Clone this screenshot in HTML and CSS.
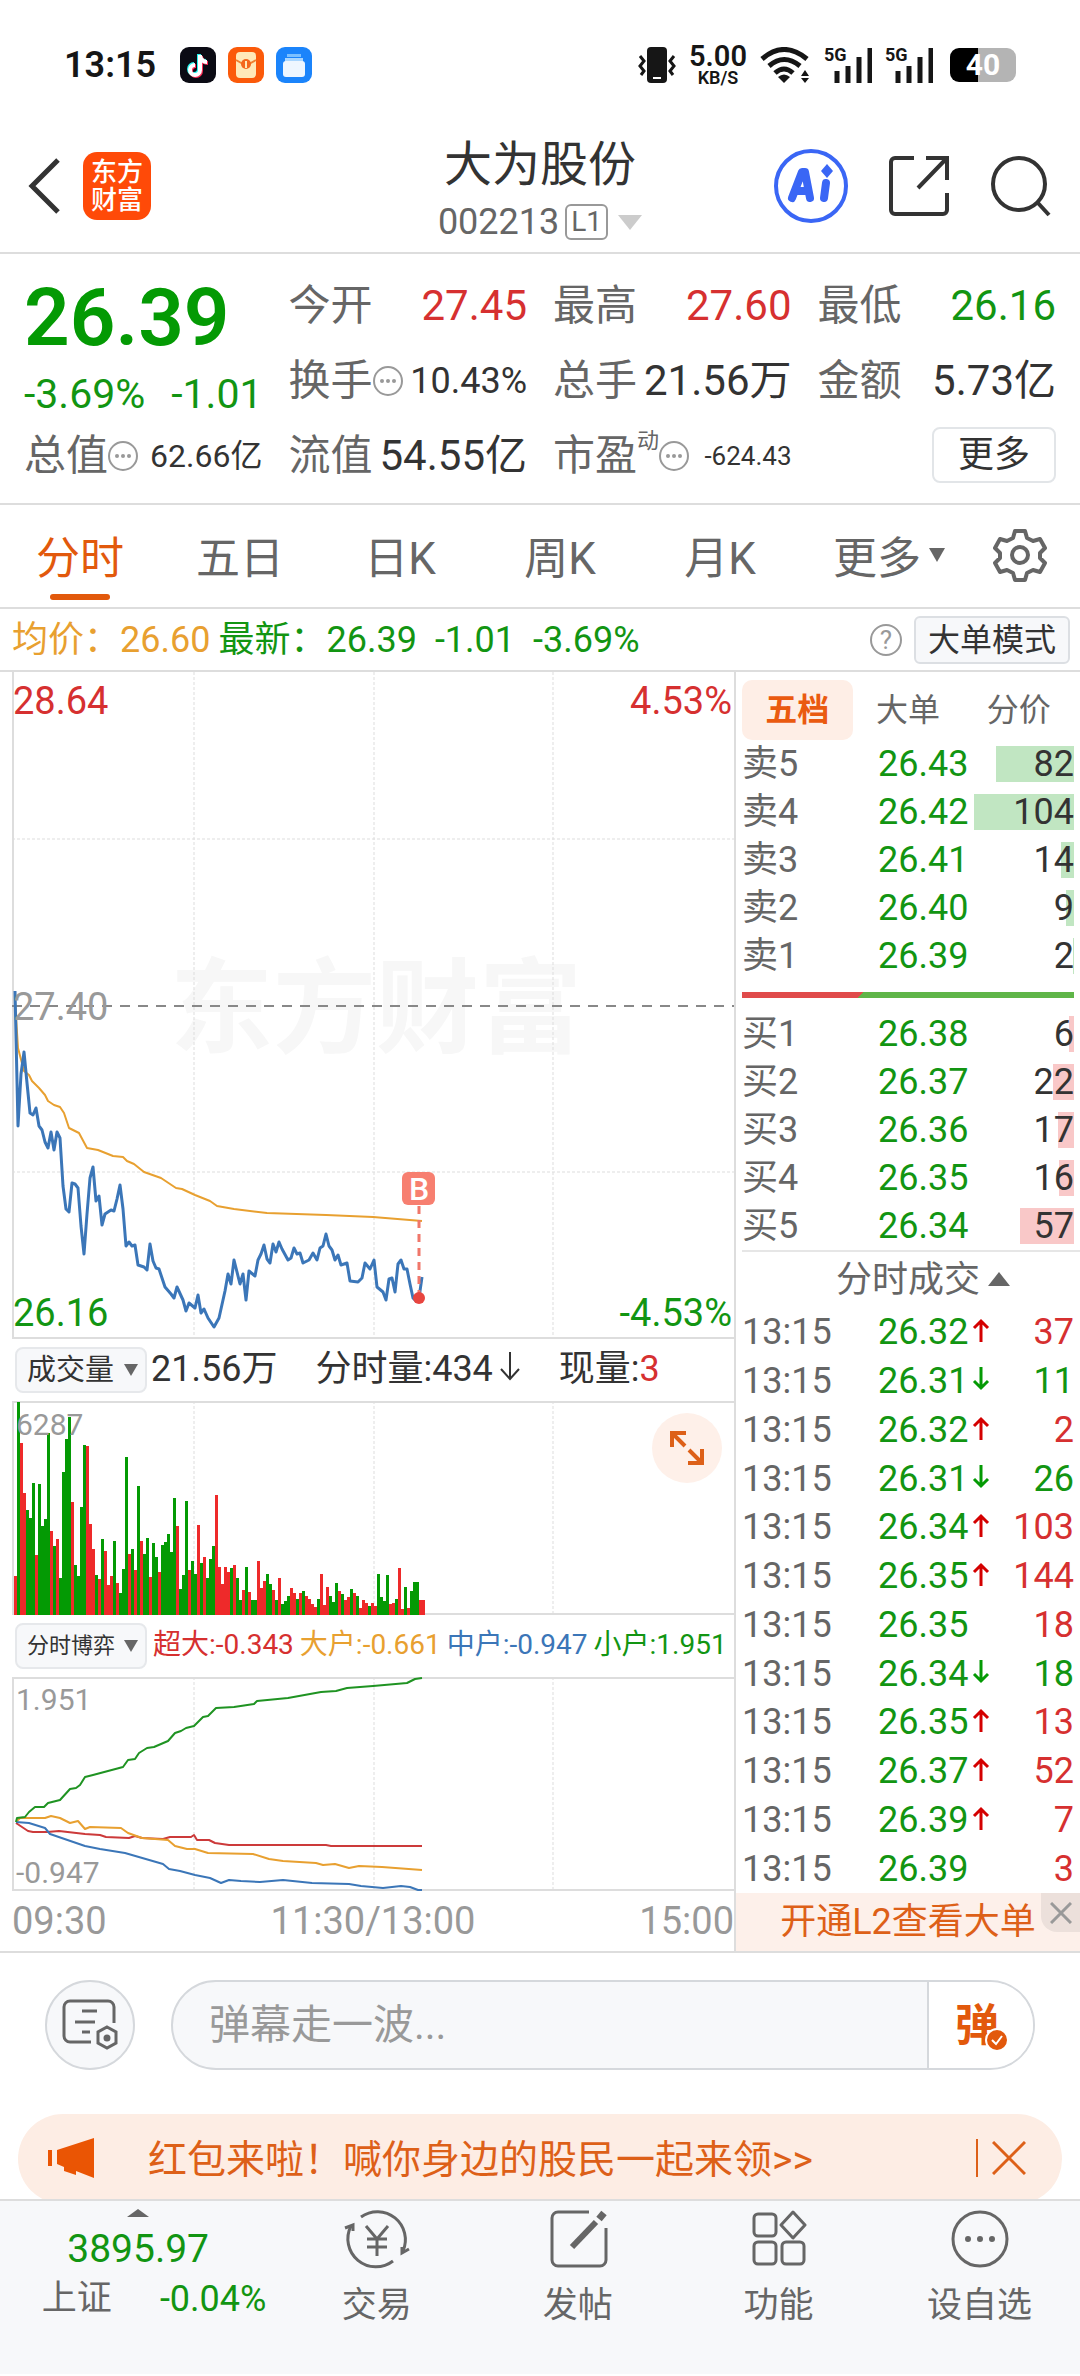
FILE: index.html
```html
<!DOCTYPE html>
<html lang="zh-CN">
<head>
    <meta charset="UTF-8">
    <meta name="viewport" content="width=device-width, initial-scale=1.0">
    <title>大为股份 002213</title>
    <link rel="stylesheet" href="styles.css">
</head>
<body>
    <div class="status-bar">
        <span class="clock">13:15</span>
        <svg class="app-icon" viewBox="0 0 36 36">
            <rect width="36" height="36" rx="9" fill="#0b0b14"/>
            <g fill="none" stroke-width="4">
                <path d="M19 7v15a5 5 0 1 1-5-5M19 8c1 4 3 6 7 6" stroke="#25f4ee"/>
                <path d="M21 9v15a5 5 0 1 1-5-5M21 10c1 4 3 6 7 6" stroke="#fe2c55"/>
                <path d="M20 8v15a5 5 0 1 1-5-5M20 9c1 4 3 6 7 6" stroke="#fff"/>
            </g>
        </svg>
        <svg class="app-icon" viewBox="0 0 36 36">
            <rect width="36" height="36" rx="9" fill="#fb5a0a"/>
            <rect x="8" y="5" width="20" height="26" rx="4" fill="#ffe9b8"/>
            <path d="M8 13l7 4M28 13l-7 4" stroke="#f08030" stroke-width="2"/>
            <circle cx="18" cy="17" r="5" fill="#f4661c"/>
            <path d="M18 14v7" stroke="#ffe9b8" stroke-width="2"/>
        </svg>
        <svg class="app-icon" viewBox="0 0 36 36">
            <rect width="36" height="36" rx="9" fill="#1b84fb"/>
            <path d="M11 7h14v3H11z" fill="#7cc0ff"/>
            <path d="M9 11h18v4H9z" fill="#a9d6ff"/>
            <rect x="7" y="14" width="22" height="16" rx="3" fill="#eef6ff"/>
        </svg>
        <div class="status-right">
            <svg width="38" height="36" viewBox="0 0 38 36">
                <rect x="9" y="0" width="20" height="36" rx="4" fill="#161616"/>
                <path d="M15 31h8" stroke="#fff" stroke-width="2"/>
                <path d="M2 9l4 5-4 5 4 5-3 4M36 9l-4 5 4 5-4 5 3 4" fill="none" stroke="#161616" stroke-width="3"/>
            </svg>
            <span class="speed"><b>5.00</b><small>KB/S</small></span>
            <svg width="51" height="36" viewBox="0 0 51 36">
                <g fill="none" stroke="#161616" stroke-width="5">
                    <path d="M2 12Q24-7 47 12"/>
                    <path d="M9 19Q24 6 40 19"/>
                    <path d="M15 26Q24 18 33 26"/>
                </g>
                <path d="M18 30q6-5 12 0l-6 6z" fill="#161616"/>
                <path d="M41 29l4-6 4 6zM41 31l4 5 4-5z" fill="#161616"/>
            </svg>
            <span class="signal">
                <small>5G</small>
                <svg width="48" height="36" viewBox="0 0 48 36"><path d="M13 36V24M24 36V19M35 36V10M46 36V1" stroke="#161616" stroke-width="5"/></svg>
            </span>
            <span class="signal">
                <small>5G</small>
                <svg width="48" height="36" viewBox="0 0 48 36"><path d="M13 36V24M24 36V19M35 36V10M46 36V1" stroke="#161616" stroke-width="5"/></svg>
            </span>
            <span class="battery">40</span>
        </div>
    </div>

    <header class="header">
        <div class="header-left">
            <button aria-label="返回">
                <svg width="34" height="56" viewBox="0 0 34 56"><path d="M30 2L4 28l26 26" fill="none" stroke="#333" stroke-width="5"/></svg>
            </button>
            <a class="logo" href="#">东方<br>财富</a>
        </div>
        <div class="header-title">
            <h1>大为股份</h1>
            <p>002213<span class="level">L1</span><i class="tri tri-light"></i></p>
        </div>
        <div class="header-right">
            <button aria-label="AI">
                <svg width="74" height="74" viewBox="0 0 74 74">
                    <circle cx="37" cy="37" r="35" fill="none" stroke="#3a66f5" stroke-width="4"/>
                    <g fill="none" stroke="#3a66f5" stroke-width="8" stroke-linecap="round" stroke-linejoin="round">
                        <path d="M18 49l10-26h3l5 26M24 42h10"/>
                        <path d="M52 34l-2 15"/>
                    </g>
                    <path d="M53 15l6 7-6 7-6-7z" fill="#3a66f5"/>
                </svg>
            </button>
            <button aria-label="分享">
                <svg width="62" height="62" viewBox="0 0 62 62" fill="none" stroke="#333" stroke-width="4">
                    <path d="M26 3H7a4 4 0 0 0-4 4v48a4 4 0 0 0 4 4h48a4 4 0 0 0 4-4V38"/>
                    <path d="M38 3h21v22M58 4L30 33"/>
                </svg>
            </button>
            <button aria-label="搜索">
                <svg width="62" height="62" viewBox="0 0 62 62" fill="none" stroke="#333" stroke-width="4">
                    <circle cx="29" cy="29" r="26"/>
                    <path d="M48 48l11 12"/>
                </svg>
            </button>
        </div>
    </header>

    <section class="quote">
        <div class="quote-price green">
            <strong>26.39</strong>
            <p><span>-3.69%</span><span>-1.01</span></p>
        </div>
        <div class="item"><label>今开</label><b class="red">27.45</b></div>
        <div class="item"><label>最高</label><b class="red">27.60</b></div>
        <div class="item"><label>最低</label><b class="green">26.16</b></div>
        <div class="item"><label>换手</label><i class="dots"></i><b class="mid">10.43%</b></div>
        <div class="item"><label>总手</label><b>21.56万</b></div>
        <div class="item"><label>金额</label><b>5.73亿</b></div>
        <div class="item"><label>总值</label><i class="dots"></i><b class="small">62.66亿</b></div>
        <div class="item"><label>流值</label><b>54.55亿</b></div>
        <div class="item"><label>市盈<sup>动</sup></label><i class="dots"></i><b class="tiny">-624.43</b></div>
        <div class="item item-more"><button class="more-btn">更多</button></div>
    </section>

    <nav class="tabs">
        <button class="active">分时</button>
        <button>五日</button>
        <button>日K</button>
        <button>周K</button>
        <button>月K</button>
        <button class="more-tab">更多<i class="tri tri-small"></i></button>
        <button aria-label="设置">
            <svg width="54" height="54" viewBox="0 0 54 54" fill="none" stroke="#666" stroke-width="4" stroke-linejoin="round">
                <path d="M22 3h10l2 7 6 3 7-2 5 9-5 5v5l5 5-5 9-7-2-6 3-2 7H22l-2-7-6-3-7 2-5-9 5-5v-5l-5-5 5-9 7 2 6-3z"/>
                <circle cx="27" cy="27" r="8"/>
            </svg>
        </button>
    </nav>

    <div class="info-line">
        <span class="orange">均价：26.60</span>
        <span class="green">最新：26.39</span>
        <span class="green">-1.01</span>
        <span class="green">-3.69%</span>
        <button class="help" aria-label="帮助">?</button>
        <button class="mode-btn">大单模式</button>
    </div>

    <main class="board">
        <div class="charts">
            <svg class="plot" viewBox="0 0 722 667">
                <text class="watermark" x="364" y="373" text-anchor="middle">东方财富</text>
                <path class="grid" d="M182 0v666M362 0v666M541 0v666M0 167h722M0 500h722"/>
                <path class="frame" d="M1 0v666h721"/>
                <path d="M0 334h722" stroke="#888" stroke-width="2" stroke-dasharray="10 8"/>
                <polyline class="line thin" stroke="#e8a030" points="3,329 6,376 12,399 17,403 20,409 27,416 33,423 36,429 42,433 48,435 52,441 57,456 61,458 67,461 75,476 86,478 101,484 111,485 115,489 122,492 132,500 149,506 164,516 170,517 183,523 198,529 205,534 222,537 255,541 314,543 361,545 410,549"/>
                <polyline class="line" stroke="#3b76b8" points="3,319 6,454 9,402 12,380 15,411 18,441 21,443 24,436 27,454 30,458 33,470 36,476 39,460 42,478 45,460 48,466 51,514 54,537 57,540 60,511 63,512 66,516 69,554 72,582 75,542 78,506 81,495 84,529 87,524 90,553 93,542 99,538 102,539 105,527 108,513 111,537 114,574 117,570 120,574 123,573 126,593 132,595 135,598 138,572 141,589 144,596 147,597 153,615 159,622 162,626 165,615 171,628 174,639 177,631 183,636 186,623 189,641 192,637 196,646 202,655 207,646 213,619 216,602 219,612 222,588 228,612 231,602 234,628 237,599 243,604 246,588 249,582 252,573 255,587 258,591 261,572 264,580 267,570 270,577 276,588 279,586 282,576 285,582 288,581 291,591 297,588 301,581 305,588 308,576 311,574 314,562 317,574 320,578 323,588 326,583 329,593 335,591 338,609 346,610 350,606 353,591 358,597 362,588 365,615 371,620 374,628 377,607 380,606 383,620 386,592 389,588 392,597 395,597 398,612 401,626 404,629 407,626 410,605"/>
                <path d="M407 534v90" stroke="#f0776a" stroke-width="3" stroke-dasharray="8 6"/>
                <circle cx="407" cy="626" r="6" fill="#e8453f"/>
                <rect x="390" y="500" width="33" height="33" rx="6" fill="#f77f70"/>
                <text class="marker" x="407" y="528" text-anchor="middle">B</text>
                <text class="axis red" x="1" y="42">28.64</text>
                <text class="axis red" x="720" y="42" text-anchor="end">4.53%</text>
                <text class="axis grey" x="1" y="348">27.40</text>
                <text class="axis green" x="1" y="654">26.16</text>
                <text class="axis green" x="720" y="654" text-anchor="end">-4.53%</text>
            </svg>

            <div class="plot-head">
                <span class="picker"><select aria-label="指标一"><option>成交量</option></select></span>
                <span>21.56万</span>
                <span class="gap">分时量:434<svg width="22" height="30" viewBox="0 0 22 30"><path d="M11 1v26M2 18l9 10 9-10" fill="none" stroke="#333" stroke-width="2"/></svg></span>
                <span class="gap">现量:<em class="red">3</em></span>
            </div>
            <div class="plot-box">
                <svg class="plot" viewBox="0 0 722 214">
                    <path class="grid" d="M182 0v214M362 0v214M541 0v214"/>
                    <path class="frame" d="M722 1H1v212h721"/>
                    <g id="volume"></g>
                    <text class="axis-small" x="4" y="34">6287</text>
                </svg>
                <button class="expand" aria-label="全屏">
                    <svg width="36" height="36" viewBox="0 0 36 36" fill="none" stroke="#dd6018" stroke-width="4">
                        <path d="M3 17V3h14M4 4l12 12M33 19v14H19M32 32L20 20"/>
                    </svg>
                </button>
            </div>

            <div class="plot-head players">
                <span class="picker"><select aria-label="指标二"><option>分时博弈</option></select></span>
                <span class="red">超大:-0.343</span>
                <span class="orange">大户:-0.661</span>
                <span class="blue">中户:-0.947</span>
                <span class="green">小户:1.951</span>
            </div>
            <svg class="plot" viewBox="0 0 722 214">
                <path class="grid" d="M182 0v214M362 0v214M541 0v214"/>
                <path class="frame" d="M722 1H1v212h721"/>
                <polyline class="line thin" stroke="#cc3a3a" points="4,146 16,154 21,155 35,155 47,154 73,157 88,158 94,160 117,161 123,159 130,161 151,162 158,160 179,160 182,158 185,163 197,163 203,166 217,168 314,168 319,169 410,169"/>
                <polyline class="line thin" stroke="#e8a030" points="4,145 8,141 17,141 33,141 39,139 48,141 58,146 66,144 73,152 78,150 109,151 116,156 130,161 156,163 163,169 175,172 183,172 196,176 241,177 257,182 271,184 304,186 311,188 323,187 337,191 347,189 370,190 410,193"/>
                <polyline class="line thin" stroke="#3b76b8" points="4,145 17,146 33,151 38,157 73,169 88,172 113,176 151,187 157,192 168,194 183,198 198,201 209,206 217,203 229,204 248,205 271,203 300,206 337,207 349,209 371,211 389,209 398,210 406,213 410,213"/>
                <polyline class="line thin" stroke="#1f9322" points="4,145 5,141 13,140 17,135 23,130 32,130 36,126 48,123 58,112 64,111 68,108 73,100 81,98 111,90 116,83 123,82 127,76 135,71 142,70 156,64 163,56 169,54 174,51 182,49 191,40 196,39 204,31 222,30 242,27 245,24 276,21 309,15 324,14 335,11 361,9 395,6 403,2 410,1"/>
                <text class="axis-small" x="4" y="33">1.951</text>
                <text class="axis-small" x="4" y="206">-0.947</text>
            </svg>
            <div class="times"><span>09:30</span><span>11:30/13:00</span><span>15:00</span></div>
        </div>

        <aside class="side">
            <div class="side-tabs">
                <button class="active">五档</button>
                <button>大单</button>
                <button>分价</button>
            </div>
            <table class="book sell">
                <tr><th>卖5</th><td class="green">26.43</td><td class="qty"><i style="width: 78%"></i><span>82</span></td></tr>
                <tr><th>卖4</th><td class="green">26.42</td><td class="qty"><i style="width: 100%"></i><span>104</span></td></tr>
                <tr><th>卖3</th><td class="green">26.41</td><td class="qty"><i style="width: 13%"></i><span>14</span></td></tr>
                <tr><th>卖2</th><td class="green">26.40</td><td class="qty"><i style="width: 8%"></i><span>9</span></td></tr>
                <tr><th>卖1</th><td class="green">26.39</td><td class="qty"><i style="width: 1%"></i><span>2</span></td></tr>
            </table>
            <div class="ratio"></div>
            <table class="book buy">
                <tr><th>买1</th><td class="green">26.38</td><td class="qty"><i style="width: 5%"></i><span>6</span></td></tr>
                <tr><th>买2</th><td class="green">26.37</td><td class="qty"><i style="width: 21%"></i><span>22</span></td></tr>
                <tr><th>买3</th><td class="green">26.36</td><td class="qty"><i style="width: 16%"></i><span>17</span></td></tr>
                <tr><th>买4</th><td class="green">26.35</td><td class="qty"><i style="width: 15%"></i><span>16</span></td></tr>
                <tr><th>买5</th><td class="green">26.34</td><td class="qty"><i style="width: 54%"></i><span>57</span></td></tr>
            </table>
            <button class="deals-title">分时成交<i class="tri tri-up"></i></button>
            <table class="deals">
                <tbody id="deals"></tbody>
            </table>
            <div class="l2">
                <a href="#">开通L2查看大单</a>
                <button class="l2-close" aria-label="关闭">
                    <svg width="22" height="22" viewBox="0 0 22 22"><path d="M1 1l20 20M21 1L1 21" stroke="#999" stroke-width="3"/></svg>
                </button>
            </div>
        </aside>
    </main>

    <div class="danmu">
        <button class="danmu-set" aria-label="弹幕设置">
            <svg width="56" height="52" viewBox="0 0 56 52" fill="none" stroke="#666" stroke-width="3">
                <path d="M29 43H8a6 6 0 0 1-6-6V8a6 6 0 0 1 6-6h38a6 6 0 0 1 6 6v16"/>
                <path d="M20 12h15M13 23h20M20 33h8"/>
                <path d="M45 28l9 5v11l-9 5-9-5V33z"/>
                <circle cx="45" cy="39" r="2" fill="#666"/>
            </svg>
        </button>
        <div class="danmu-box">
            <input type="text" placeholder="弹幕走一波..." aria-label="弹幕">
            <button class="danmu-toggle">弹<svg width="24" height="24" viewBox="0 0 24 24"><circle cx="12" cy="12" r="11" fill="#e2590c" stroke="#fff" stroke-width="2"/><path d="M7 12l4 4 6-8" fill="none" stroke="#fff" stroke-width="2"/></svg></button>
        </div>
    </div>

    <div class="notice-wrap">
        <div class="notice">
            <svg width="46" height="40" viewBox="0 0 46 40" fill="#ea5504">
                <path d="M0 12h4v16H0zM9 12L46 0v40L28 33v4l-12-4v-4l-7-3z"/>
            </svg>
            <a href="#">红包来啦！喊你身边的股民一起来领&gt;&gt;</a>
            <button aria-label="关闭">
                <svg width="34" height="34" viewBox="0 0 34 34"><path d="M1 1l32 32M33 1L1 33" stroke="#dd6018" stroke-width="3"/></svg>
            </button>
        </div>
    </div>

    <nav class="bottom-nav">
        <a href="#" class="index">
            <i class="tri tri-up tri-index"></i>
            <span class="index-value">3895.97</span>
            <span class="index-row"><span>上证</span><span class="green">-0.04%</span></span>
        </a>
        <a href="#">
            <svg width="66" height="60" viewBox="0 0 66 60" fill="none" stroke="#666" stroke-width="3">
                <path d="M17 8a28 28 0 0 1 42 34M49 52A28 28 0 0 1 7 17"/>
                <path d="M1 19l8-3v6M65 40l-7 4V38" />
                <path d="M22 17l11 13 11-13M33 30v17M23 30h20M23 38h20"/>
            </svg>
            <span>交易</span>
        </a>
        <a href="#">
            <svg width="60" height="60" viewBox="0 0 60 60" fill="none" stroke="#666" stroke-width="3">
                <path d="M41 3H10a6 6 0 0 0-6 6v42a6 6 0 0 0 6 6h42a6 6 0 0 0 6-6V19"/>
                <path d="M24 38L48 13" stroke-width="6"/>
                <path d="M51 10l5-6" stroke-width="7"/>
            </svg>
            <span>发帖</span>
        </a>
        <a href="#">
            <svg width="56" height="60" viewBox="0 0 56 60" fill="none" stroke="#666" stroke-width="3">
                <rect x="3" y="5" width="22" height="22" rx="4"/>
                <path d="M42 3l12 13-12 13-12-13z" stroke-linejoin="round"/>
                <rect x="3" y="33" width="22" height="22" rx="4"/>
                <rect x="31" y="33" width="22" height="22" rx="4"/>
            </svg>
            <span>功能</span>
        </a>
        <a href="#">
            <svg width="60" height="60" viewBox="0 0 60 60" fill="none" stroke="#666" stroke-width="3">
                <circle cx="30" cy="30" r="27"/>
                <path d="M18 30h0M30 30h0M42 30h0" stroke-width="6" stroke-linecap="round"/>
            </svg>
            <span>设自选</span>
        </a>
    </nav>

    <script src="chart.js"></script>
</body>
</html>
```
FILE: chart.js
```js
// one bar per minute: positive = up (red), negative = down (green)
const volume = [
    117, -639, 515, 365, -314, -290, -396, 180, -393, -266, -289, -547, 251, -206, 228, -112, -429,
    -527, -595, 338, -150, -116, -324, -509, 506, 273, 197, -119, 109, -229, 191, 90, 116, -222,
    97, -67, -137, -475, 184, -197, 135, -387, 221, -184, -231, 113, -215, -173, 130, -209, -219,
    -242, -189, -352, 268, -78, -121, -341, 134, -161, -122, 269, -157, 175, -112, -169, -206, 359,
    144, 92, 143, 130, -141, 149, -112, -44, 75, -143, 69, -44, -46, 162, 81, 102, -122, -93, 75,
    -45, 111, -33, -41, -56, 80, 65, -49, 67, -71, 57, 49, 34, 23, -49, 122, 30, 85, -57, -38, -95,
    72, -62, 44, 55, -78, 66, -57, 21, 44, 35, -27, 35, 27, -124, -54, -41, -120, 33, 36, -48, 140,
    17, -83, 21, -71, -99, -99, 46, 44
];

const maxVolume = 639;
const plotHeight = 213;
const group = document.getElementById('volume');

volume.forEach(function(v, i) {
    const bar = document.createElementNS('http://www.w3.org/2000/svg', 'rect');
    const h = Math.round(Math.abs(v) / maxVolume * plotHeight);
    bar.setAttribute('x', 2 + i * 3);
    bar.setAttribute('y', 214 - h);
    bar.setAttribute('width', 3);
    bar.setAttribute('height', h);
    bar.setAttribute('class', v > 0 ? 'bar-up' : 'bar-down');
    group.appendChild(bar);
});

// [price, tick, quantity, colour]
const deals = [
    ['26.32', 'up', 37, 'red'],
    ['26.31', 'down', 11, 'green'],
    ['26.32', 'up', 2, 'red'],
    ['26.31', 'down', 26, 'green'],
    ['26.34', 'up', 103, 'red'],
    ['26.35', 'up', 144, 'red'],
    ['26.35', '', 18, 'red'],
    ['26.34', 'down', 18, 'green'],
    ['26.35', 'up', 13, 'red'],
    ['26.37', 'up', 52, 'red'],
    ['26.39', 'up', 7, 'red'],
    ['26.39', '', 3, 'red']
];

const arrows = {
    up: '<svg width="22" height="26" viewBox="0 0 22 26"><path d="M12 24V3M5 10l7-7 7 7" fill="none" stroke="#d40000" stroke-width="3"/></svg>',
    down: '<svg width="22" height="26" viewBox="0 0 22 26"><path d="M12 0v21M5 14l7 7 7-7" fill="none" stroke="#049a04" stroke-width="3"/></svg>'
};

document.getElementById('deals').innerHTML = deals.map(function(d) {
    return `<tr><th>13:15</th><td class="green">${d[0]}${arrows[d[1]] || ''}</td><td class="${d[3]}">${d[2]}</td></tr>`;
}).join('');
```
FILE: styles.css
```css
* {
    box-sizing: border-box;
}
body {
    margin: 0;
    background: #fff;
    color: #333;
    font-family: Roboto, "Noto Sans CJK SC", sans-serif;
    font-size: 36px;
}
h1, p {
    margin: 0;
    font-weight: 400;
}
button, input, select {
    font: inherit;
    color: inherit;
    background: none;
    border: 0;
    padding: 0;
    margin: 0;
}
button {
    cursor: pointer;
}
a {
    color: inherit;
    text-decoration: none;
}
b, th, i, em {
    font-weight: 400;
    font-style: normal;
}
svg {
    flex-shrink: 0;
}
.red {
    color: #d63030;
    fill: #d63030;
}
.green {
    color: #129512;
    fill: #129512;
}
.orange {
    color: #e8a030;
}
.blue {
    color: #3b76b8;
}
.grey {
    fill: #999;
}

/* small triangles */
.tri {
    display: inline-block;
    border: 8px solid transparent;
    border-top: 14px solid #666;
    border-bottom: 0;
}
.tri-light {
    border-width: 15px 12px 0;
    border-top-color: #ccc;
    margin-left: 10px;
}
.tri-small {
    margin-left: 8px;
}
.tri-up {
    border-width: 0 11px 14px;
    border-bottom: 14px solid #666;
    margin-left: 8px;
}

/* status bar */
.status-bar {
    display: flex;
    align-items: center;
    gap: 12px;
    height: 120px;
    padding: 10px 64px 0;
    color: #161616;
}
.clock {
    margin-right: 12px;
    font-size: 36px;
    font-weight: 600;
}
.app-icon {
    width: 36px;
    height: 36px;
}
.status-right {
    display: flex;
    align-items: center;
    gap: 13px;
    margin-left: auto;
}
.speed {
    display: flex;
    flex-direction: column;
    align-items: center;
    font-size: 29px;
    line-height: 26px;
}
.speed b {
    font-weight: 600;
}
.speed small {
    font-size: 18px;
    font-weight: 600;
    line-height: 18px;
}
.signal {
    position: relative;
    display: flex;
}
.signal small {
    position: absolute;
    left: 0;
    top: 0;
    font-size: 18px;
    font-weight: 700;
    line-height: 16px;
}
.battery {
    width: 66px;
    margin-left: 4px;
    border-radius: 9px;
    background: linear-gradient(90deg, #000 42%, #b4b4b4 42%);
    color: #fff;
    font-size: 30px;
    font-weight: 700;
    line-height: 34px;
    text-align: center;
}

/* header */
.header {
    display: grid;
    grid-template-columns: 1fr auto 1fr;
    align-items: center;
    height: 134px;
    padding: 0 28px;
    border-bottom: 2px solid #ddd;
}
.header-left, .header-right {
    display: flex;
    align-items: center;
}
.header-left {
    gap: 21px;
}
.header-right {
    justify-content: flex-end;
    gap: 40px;
}
.header svg {
    display: block;
}
.logo {
    width: 68px;
    padding: 6px 0;
    border-radius: 14px;
    background: #ff4a08;
    color: #fff;
    font-size: 26px;
    font-weight: 500;
    line-height: 28px;
    text-align: center;
}
.header-title {
    padding-top: 6px;
    text-align: center;
}
.header-title h1 {
    font-size: 48px;
    line-height: 66px;
}
.header-title p {
    display: flex;
    align-items: center;
    justify-content: center;
    color: #666;
    line-height: 48px;
}
.level {
    margin-left: 6px;
    padding: 0 4px;
    border: 2px solid #999;
    border-radius: 6px;
    font-size: 28px;
    line-height: 32px;
}

/* quote */
.quote {
    display: grid;
    grid-template-columns: repeat(4, 1fr);
    grid-auto-rows: 75px;
    column-gap: 26px;
    padding: 13px 24px 11px;
    border-bottom: 2px solid #ddd;
}
.quote-price {
    grid-row: span 2;
}
.quote-price strong {
    display: block;
    color: #049a04;
    font-size: 80px;
    font-weight: 600;
    line-height: 102px;
}
.quote-price p {
    display: flex;
    justify-content: space-between;
    font-size: 41px;
    line-height: 50px;
}
.item {
    display: flex;
    align-items: center;
    padding-top: 2px;
    line-height: 70px;
    white-space: nowrap;
}
.item label {
    color: #666;
    font-size: 42px;
}
.item sup {
    font-size: 22px;
    line-height: 0;
    vertical-align: 22px;
}
.item b {
    margin-left: auto;
    font-size: 42px;
}
.item .mid {
    font-size: 36px;
}
.item .small {
    font-size: 32px;
}
.item .tiny {
    font-size: 26px;
}
.dots {
    display: flex;
    align-items: center;
    justify-content: center;
    width: 30px;
    height: 30px;
    border: 2px solid #999;
    border-radius: 50%;
}
.dots::before {
    content: "";
    width: 4px;
    height: 4px;
    border-radius: 50%;
    background: #999;
    box-shadow: -6px 0 #999, 6px 0 #999;
}
.item-more {
    justify-content: flex-end;
    padding-top: 0;
}
.more-btn {
    width: 124px;
    border: 2px solid #e2e5e8;
    border-radius: 8px;
    line-height: 52px;
}

/* period tabs */
.tabs {
    display: grid;
    grid-template-columns: repeat(6, 4fr) 3fr;
    height: 104px;
    border-bottom: 2px solid #ddd;
    color: #666;
    font-size: 44px;
}
.tabs button {
    display: flex;
    position: relative;
    align-items: center;
    justify-content: center;
    padding-bottom: 2px;
}
.tabs .more-tab {
    padding-left: 18px;
}
.tabs .active {
    color: #e2590c;
}
.tabs .active::after {
    content: "";
    position: absolute;
    left: 50%;
    bottom: 7px;
    width: 60px;
    height: 6px;
    margin-left: -30px;
    border-radius: 3px;
    background: #e2590c;
}

/* average / last price */
.info-line {
    display: flex;
    align-items: center;
    gap: 18px;
    height: 63px;
    padding: 0 10px 0 12px;
    border-bottom: 2px solid #ddd;
}
.info-line span {
    height: 44px;
    line-height: 44px;
}
.info-line .orange {
    margin-right: -10px;
}
.help {
    width: 32px;
    margin-left: auto;
    margin-right: -6px;
    border: 2px solid #999;
    border-radius: 50%;
    color: #999;
    font-size: 26px;
    line-height: 28px;
}
.mode-btn {
    width: 156px;
    border: 2px solid #dcdfe3;
    border-radius: 6px;
    background: #f7f8fa;
    font-size: 32px;
    line-height: 44px;
}

/* charts */
.board {
    display: grid;
    grid-template-columns: 736fr 344fr;
    border-bottom: 2px solid #ddd;
}
.charts {
    padding-left: 12px;
    border-right: 2px solid #ddd;
}
.plot {
    display: block;
    width: 100%;
}
.grid {
    fill: none;
    stroke: #ddd;
    stroke-dasharray: 3 2;
}
.frame {
    fill: none;
    stroke: #ddd;
    stroke-width: 2;
}
.line {
    fill: none;
    stroke-width: 3;
    stroke-linejoin: round;
}
.thin {
    stroke-width: 2;
}
.watermark {
    fill: #f7f7f7;
    font-size: 103px;
    font-weight: 700;
}
.axis {
    font-size: 38px;
}
.axis-small {
    fill: #999;
    font-size: 30px;
}
.marker {
    fill: #fff;
    font-size: 32px;
    font-weight: 500;
}
.bar-up {
    fill: #ee2a2a;
}
.bar-down {
    fill: #049a04;
}
.plot-head {
    display: flex;
    align-items: center;
    gap: 4px;
    height: 62px;
    padding-left: 3px;
    line-height: 42px;
    white-space: nowrap;
}
.plot-head > span {
    padding-bottom: 2px;
}
.plot-head .picker {
    padding-bottom: 0;
}
.plot-head .gap {
    margin-left: 34px;
}
.plot-head svg {
    margin-left: 6px;
}
.players {
    gap: 6px;
    font-size: 28px;
}
.picker {
    position: relative;
}
.picker select {
    display: block;
    width: 132px;
    height: 46px;
    padding-left: 10px;
    appearance: none;
    border: 2px solid #e6e8eb;
    border-radius: 8px;
    background: #f7f8fa;
    font-size: 29px;
}
.players .picker select {
    font-size: 22px;
}
.picker::after {
    content: "";
    position: absolute;
    right: 9px;
    top: 17px;
    border: 7px solid transparent;
    border-top: 12px solid #666;
    border-bottom: 0;
    pointer-events: none;
}
.plot-box {
    position: relative;
}
.expand {
    position: absolute;
    right: 12px;
    top: 12px;
    width: 70px;
    height: 70px;
    border-radius: 50%;
    background: #fef0e9;
}
.expand svg {
    display: block;
    margin: 0 auto;
}
.times {
    display: flex;
    justify-content: space-between;
    color: #999;
    font-size: 38px;
    line-height: 60px;
}

/* order book */
.side {
    display: flex;
    flex-direction: column;
    padding: 8px 0 0 6px;
}
.side > * {
    margin-right: 6px;
}
.side-tabs {
    display: grid;
    grid-template-columns: repeat(3, 1fr);
    color: #666;
    font-size: 32px;
    line-height: 60px;
}
.side-tabs .active {
    border-radius: 10px;
    background: #feeee6;
    color: #ea5a10;
    font-weight: 700;
}
.side table {
    table-layout: fixed;
    border-collapse: collapse;
    text-align: left;
}
.side th, .side td {
    padding: 0;
    line-height: 48px;
    white-space: nowrap;
}
.side th {
    width: 41%;
    color: #666;
}
.side td:last-child {
    text-align: right;
}
.book .qty {
    position: relative;
    width: 30%;
}
.qty i {
    position: absolute;
    right: 0;
    top: 6px;
    bottom: 6px;
    background: #c1e6c2;
}
.buy .qty i {
    background: #f9c8c8;
}
.qty span {
    position: relative;
}
.ratio {
    height: 6px;
    margin-top: 12px;
    margin-bottom: 12px;
    background: linear-gradient(135deg, #e04b4b 36%, #5fb548 36%);
}
.deals-title {
    margin-right: 0;
    padding-left: 24px;
    border-top: 2px solid #e6e6e6;
    color: #666;
    line-height: 56px;
}
.deals-title .tri {
    vertical-align: 6px;
}
.deals {
    flex: 1;
}
.deals td:last-child {
    width: 25%;
}
.l2 {
    position: relative;
    margin: 0 0 0 -6px;
    background: #fdf0ea;
    color: #dd6018;
    line-height: 58px;
    text-align: center;
}
.l2-close {
    position: absolute;
    right: 0;
    top: 0;
    width: 39px;
    height: 39px;
    border-bottom-left-radius: 16px;
    background: #ece0db;
    line-height: 0;
}

/* comment box */
.danmu {
    display: flex;
    gap: 36px;
    padding: 27px 45px 44px;
}
.danmu-set {
    width: 90px;
    height: 90px;
    border: 2px solid #d5d8dc;
    border-radius: 50%;
    background: #f7f8fa;
    line-height: 0;
}
.danmu-box {
    display: flex;
    flex: 1;
    height: 90px;
    overflow: hidden;
    border: 2px solid #d5d8dc;
    border-radius: 45px;
    background: #f7f8fa;
}
.danmu-box input {
    flex: 1;
    min-width: 0;
    padding-left: 36px;
    font-size: 41px;
}
.danmu-box input::placeholder {
    color: #999;
}
.danmu-toggle {
    position: relative;
    width: 106px;
    padding: 0 8px 6px 0;
    border-left: 2px solid #d5d8dc;
    background: #fff;
    color: #e2590c;
    font-size: 44px;
    font-weight: 700;
}
.danmu-toggle svg {
    position: absolute;
    right: 24px;
    bottom: 16px;
}

/* notice, the bottom bar cuts off its lower edge */
.notice-wrap {
    height: 85px;
    overflow: hidden;
    padding: 0 18px;
}
.notice {
    display: flex;
    align-items: center;
    height: 90px;
    padding: 0 36px 2px 30px;
    border-radius: 45px;
    background: #fdede4;
    color: #dd6018;
    font-size: 39px;
}
.notice a {
    flex: 1;
    margin-left: 54px;
    padding-bottom: 4px;
}
.notice button {
    height: 38px;
    padding-left: 14px;
    border-left: 2px solid #dd6018;
    line-height: 0;
}

/* bottom bar */
.bottom-nav {
    display: grid;
    grid-template-columns: 11fr repeat(4, 8fr);
    min-height: 175px;
    padding-top: 8px;
    border-top: 2px solid #ddd;
    background: #f7f8fa;
    color: #666;
    font-size: 35px;
}
.bottom-nav a {
    display: flex;
    flex-direction: column;
    align-items: center;
    line-height: 52px;
}
.bottom-nav svg {
    margin-bottom: 11px;
}
.tri-index {
    border-width: 0 11px 8px;
    margin-left: 0;
}
.index-value {
    color: #129512;
    font-size: 39px;
    line-height: 64px;
}
.index-row {
    display: flex;
    gap: 48px;
    padding-left: 32px;
    line-height: 36px;
}
.index-row .green {
    font-size: 36px;
}
```
